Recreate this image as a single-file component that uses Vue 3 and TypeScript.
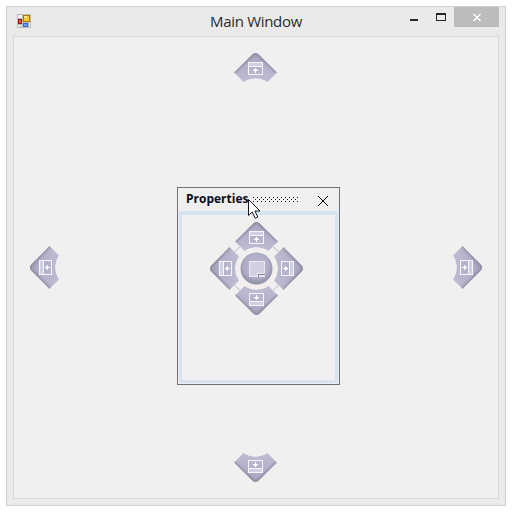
<script setup lang="ts">
interface Guide {
  id: string
  x: number
  y: number
  angle: number
}

const guides: Guide[] = [
  { id: 'edge-top', x: 255.5, y: 53, angle: 0 },
  { id: 'edge-right', x: 482, y: 267.5, angle: 90 },
  { id: 'edge-bottom', x: 255.5, y: 482, angle: 180 },
  { id: 'edge-left', x: 30, y: 267.5, angle: 270 },
  { id: 'inner-top', x: 256.5, y: 222, angle: 0 },
  { id: 'inner-right', x: 303, y: 268.5, angle: 90 },
  { id: 'inner-bottom', x: 256.5, y: 315, angle: 180 },
  { id: 'inner-left', x: 210, y: 268.5, angle: 270 },
]

const place = (g: Guide) => `translate(${g.x} ${g.y}) rotate(${g.angle})`
</script>

<template>
  <main class="desktop">
    <section class="window">
      <header class="titlebar">
        <svg class="app-icon" width="14" height="14" viewBox="0 0 14 14" shape-rendering="crispEdges">
          <rect width="14" height="14" fill="#bcbcbc" />
          <path d="M1 1h4v3H1zM1 11h2v2H1zM4 11h1v2H4zM12 9h1v4h-1z" fill="#f0f0f0" />
          <rect x="1" y="5" width="4" height="5" fill="#9c1710" />
          <rect x="2" y="6" width="2" height="3" fill="#e0584c" />
          <rect x="6" y="1" width="7" height="7" fill="#a87a0c" />
          <rect x="7" y="2" width="5" height="5" fill="#f8c837" />
          <rect x="7" y="2" width="3" height="2" fill="#ffe58a" />
          <rect x="6" y="9" width="5" height="4" fill="#3b69cf" />
          <rect x="7" y="10" width="3" height="2" fill="#719bf0" />
        </svg>
        <h1 class="title">Main Window</h1>
        <div class="controls">
          <svg class="minmax" width="54" height="20" viewBox="0 0 54 20" shape-rendering="crispEdges">
            <rect x="10" y="12" width="8" height="2" fill="#262626" />
            <path d="M36 6h10v8H36zM37 8v5h8V8z" fill="#262626" fill-rule="evenodd" />
          </svg>
          <button class="close" aria-label="Close">
            <svg width="8" height="7" viewBox="0 0 8 7" shape-rendering="crispEdges">
              <path d="M0 0h2v1h1v1h2V1h1V0h2v1H7v1H6v1H5v1h1v1h1v1h1v1H6V6H5V5H3v1H2v1H0V6h1V5h1V4h1V3H2V2H1V1H0z" fill="#fff" />
            </svg>
          </button>
        </div>
      </header>
      <div class="client">
        <section class="panel">
          <header class="panel-head">
            <h2 class="panel-title">Properties</h2>
            <svg class="grip" width="46" height="5" viewBox="0 0 46 5" shape-rendering="crispEdges">
              <defs>
                <pattern id="dots" width="4" height="4" patternUnits="userSpaceOnUse">
                  <rect x="0" y="0" width="1" height="1" fill="#111" />
                  <rect x="2" y="2" width="1" height="1" fill="#111" />
                </pattern>
              </defs>
              <rect width="46" height="5" fill="url(#dots)" />
            </svg>
            <svg class="panel-close" width="10" height="10" viewBox="0 0 10 10">
              <path d="M0 0l10 10M10 0L0 10" stroke="#000" stroke-width="1" shape-rendering="crispEdges" />
            </svg>
          </header>
          <div class="panel-body"></div>
        </section>
      </div>
    </section>

    <svg class="overlay" width="513" height="513" viewBox="0 0 513 513">
      <defs>
        <path id="petal" d="M-2.5.7Q0-.7 2.5.7L21.5 19.5 12 29.2A21 21 0 0 0-12 29.2L-21.5 19.5Z" />
        <clipPath id="petal-clip"><use href="#petal" /></clipPath>
        <linearGradient id="petal-fill" x1="0" y1="0" x2="0" y2="1">
          <stop offset="0" stop-color="#a5a2b9" />
          <stop offset=".38" stop-color="#b2afca" />
          <stop offset="1" stop-color="#bfbdd2" />
        </linearGradient>
        <radialGradient id="hub-fill" cx=".5" cy=".42" r=".58">
          <stop offset="0" stop-color="#bbb9d0" />
          <stop offset=".65" stop-color="#b0aec7" />
          <stop offset="1" stop-color="#8e8ba3" />
        </radialGradient>
        <filter id="soft" x="-20%" y="-20%" width="140%" height="140%">
          <feGaussianBlur stdDeviation="1.6" />
        </filter>
        <g id="guide">
          <g clip-path="url(#petal-clip)">
            <use href="#petal" fill="url(#petal-fill)" />
            <path d="M-23 20L0-2 23 20" fill="none" stroke="#817e92" stroke-width="3" filter="url(#soft)" />
          </g>
          <g shape-rendering="crispEdges">
            <rect x="-6.5" y="10" width="13" height="3" fill="#d0d0e4" />
            <path d="M-7.5 9h15v13h-15zM-6.5 10v3h13v-3zM-6.5 14v7h13v-7z" fill="#f5f5fb" fill-rule="evenodd" />
            <path d="M-.5 15h1v1h1v1h1v1h-2v2h-1v-2h-2v-1h1v-1h1z" fill="#fff" />
          </g>
        </g>
      </defs>

      <path d="M234.5 252l5.5-5.5M273 246.500l5.500 5.500M278.500 285l-5.500 5.500M240 290.500l-5.500-5.500" stroke="#b8b8b8" fill="none" />
      <use v-for="g in guides" :key="g.id" href="#guide" :transform="place(g)" />
      <circle cx="256.500" cy="268.500" r="18.500" fill="none" stroke="#f3efef" stroke-width="5" />
      <circle cx="256.500" cy="268.500" r="16" fill="url(#hub-fill)" />
      <g shape-rendering="crispEdges">
        <path d="M249 261h16v16h-16z" fill="#e9e9f4" />
        <path d="M250 262h14v11h-7v3h-7z" fill="#d0d0e2" />
        <path d="M258 274h7v1h-6v2h-1z" fill="#85829c" />
      </g>
      <path d="M248.500 199.500v16l3.700-3.500 3 6.200 2.600-1.200-2.900-6h5.100z" fill="#fff" stroke="#151525" stroke-width="1" />
    </svg>
  </main>
</template>

<style>
body {
  background: #fff;
}
</style>

<style scoped>
.desktop {
  position: relative;
  box-sizing: border-box;
  width: 513px;
  height: 513px;
  padding: 6px;
  font-family: "Open Sans", "Noto Sans", sans-serif;
}
.window {
  box-sizing: border-box;
  display: flex;
  flex-direction: column;
  width: 500px;
  height: 500px;
  padding: 0 6px 6px;
  border: 1px solid #cfd0d0;
  background: #eaeaea;
}
.titlebar {
  display: grid;
  grid-template-columns: 99px 1fr 99px;
  height: 29px;
}
.app-icon {
  margin: 7px 0 0 4px;
}
.title {
  margin: 0;
  text-align: center;
  white-space: nowrap;
  font-size: 15px;
  font-weight: 400;
  letter-spacing: -.3px;
  line-height: 29px;
  color: #2b2b2b;
}
.controls {
  display: flex;
  height: 20px;
}
.minmax {
  flex: none;
}
.close {
  display: flex;
  align-items: center;
  justify-content: center;
  width: 45px;
  height: 20px;
  padding: 0;
  border: 0;
  background: #bcbcbc;
}
.client {
  box-sizing: border-box;
  flex: 1;
  padding: 150px 0 0 163px;
  border: 1px solid #d9d9d9;
  background: #f0f0f0;
}
.panel {
  box-sizing: border-box;
  display: flex;
  flex-direction: column;
  width: 163px;
  height: 198px;
  padding: 0 1px 1px;
  border: 1px solid #707070;
  background: #efeff0;
}
.panel-head {
  display: flex;
  align-items: flex-start;
  height: 23px;
}
.panel-title {
  width: 67px;
  margin: 0 0 0 7px;
  white-space: nowrap;
  font-size: 12px;
  font-weight: 700;
  line-height: 22px;
  color: #0b0b14;
}
.grip {
  margin-top: 9px;
}
.panel-close {
  margin: 8px 0 0 19px;
}
.panel-body {
  flex: 1;
  border: 3px solid #d7e3f0;
  border-top-width: 4px;
  background: #f0f0f0;
}
.overlay {
  position: absolute;
  top: 0;
  left: 0;
  pointer-events: none;
}
</style>
